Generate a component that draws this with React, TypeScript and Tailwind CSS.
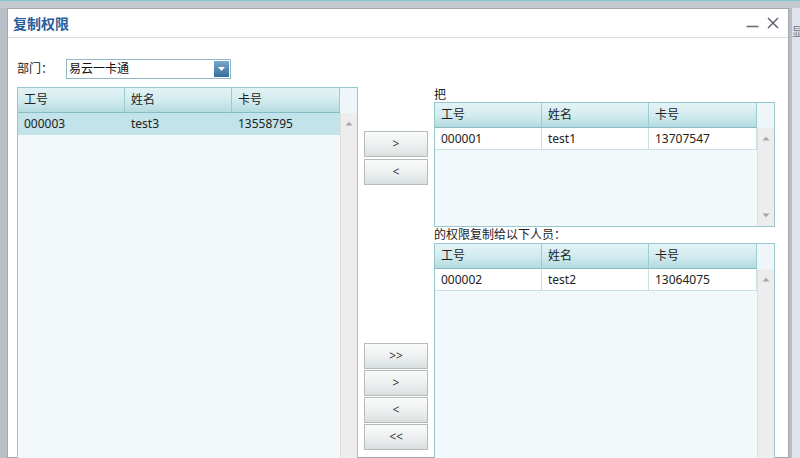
const cols = ["工号", "姓名", "卡号"];
const colW = ["w-[107px]", "w-[107px]", "w-[108px]"];

type Row = [string, string, string];

function UpArrow() {
  return (
    <svg width="8" height="5" viewBox="0 0 8 5" className="block">
      <path d="M0.5 4.5 L4 0.8 L7.5 4.5 Z" fill="#a6a6a6" />
    </svg>
  );
}

function DownArrow() {
  return (
    <svg width="8" height="5" viewBox="0 0 8 5" className="block">
      <path d="M0.5 0.5 L4 4.2 L7.5 0.5 Z" fill="#a6a6a6" />
    </svg>
  );
}

function Grid({
  rows,
  selected,
  h,
  downArrow,
}: {
  rows: Row[];
  selected?: boolean;
  h: string;
  downArrow?: boolean;
}) {
  return (
    <div className={`flex w-[341px] flex-col border border-[#97c8ce] bg-[#f3f8fb] ${h}`}>
      <div className="flex h-[25px] shrink-0">
        {cols.map((c, i) => (
          <div
            key={c}
            className={`${colW[i]} flex items-center border-r border-b border-r-[#9ccbd0] border-b-[#86bcc3] bg-gradient-to-b from-[#e3f3f5] via-[#d3ecef] to-[#b3dbe0] pl-[6px] text-[12px] text-[#222]`}
          >
            {c}
          </div>
        ))}
        <div className="flex-1 bg-[#eef6f9]" />
      </div>
      <div className="flex min-h-0 flex-1">
        <div className="flex-1">
          {rows.map((r) => (
            <div
              key={r[0]}
              className={`flex h-[22px] ${selected ? "bg-[#c2e3e9]" : "bg-white"}`}
            >
              {r.map((v, i) => (
                <div
                  key={i}
                  className={`${colW[i]} flex items-center pl-[6px] text-[12px] text-[#222] ${
                    selected ? "" : "border-r border-b border-[#c6e0e4]"
                  }`}
                >
                  {v}
                </div>
              ))}
            </div>
          ))}
        </div>
        <div className="flex w-[17px] flex-col items-center justify-between border-l border-[#dedede] bg-[#ededed] pt-[8px] pb-[8px]">
          <UpArrow />
          {downArrow ? <DownArrow /> : <span />}
        </div>
      </div>
    </div>
  );
}

function Btn({ label }: { label: string }) {
  return (
    <div className="flex h-[26px] w-[64px] items-center justify-center border border-[#b3bbbb] bg-gradient-to-b from-[#f9fafa] via-[#eef1f1] to-[#d9dfdf] text-[12px] text-[#333]">
      {label}
    </div>
  );
}

export default function App() {
  return (
    <div className="relative flex h-[458px] w-[800px] flex-col overflow-hidden bg-[#c4c8cf] font-['Noto_Sans','Noto_Sans_CJK_SC',sans-serif]">
      <div className="h-px shrink-0 bg-[#86c3d3]" />
      <div className="flex min-h-0 flex-1 pt-[7px]">
        <div className="w-[7px] shrink-0 bg-[#babec6]" />
        <div className="flex w-[782px] shrink-0 flex-col border border-[#a3a7ae] bg-white">
          <div className="flex h-[29px] shrink-0 items-center justify-between border-b border-[#dcdcdc] pl-[5px] pr-[9px]">
            <span className="text-[14px] font-bold text-[#2a5d9c]">复制权限</span>
            <div className="flex items-center gap-[8px]">
              <svg width="13" height="12" viewBox="0 0 13 12">
                <path d="M0.5 9.5 H12.5" stroke="#6e6e6e" strokeWidth="1.6" />
              </svg>
              <svg width="12" height="12" viewBox="0 0 12 12">
                <path d="M1 1 L11 11 M11 1 L1 11" stroke="#5c6470" strokeWidth="1.5" />
              </svg>
            </div>
          </div>

          <div className="flex flex-col pl-[9px] pt-[21px]">
            <div className="flex h-[20px] items-center text-[12px] text-[#222]">
              <span className="w-[49px]">部门：</span>
              <div className="flex h-[20px] w-[165px] items-center justify-between border border-[#8fb9c6] bg-white pl-[2px] pr-px">
                <span className="text-[12px] text-[#111]">易云一卡通</span>
                <div className="flex h-[16px] w-[15px] items-center justify-center bg-gradient-to-b from-[#7aa9cb] to-[#2f6e9c]">
                  <svg width="7" height="4" viewBox="0 0 7 4">
                    <path d="M0 0 H7 L3.5 4 Z" fill="#fff" />
                  </svg>
                </div>
              </div>
            </div>

            <div className="mt-[8px] flex">
              <Grid rows={[["000003", "test3", "13558795"]]} selected h="h-[380px]" />

              <div className="ml-[6px] flex w-[64px] flex-col">
                <div className="mt-[44px] flex flex-col gap-[2px]">
                  <Btn label=">" />
                  <Btn label="<" />
                </div>
                <div className="mt-[158px] flex flex-col gap-px">
                  <Btn label=">>" />
                  <Btn label=">" />
                  <Btn label="<" />
                  <Btn label="<<" />
                </div>
              </div>

              <div className="ml-[6px] flex flex-col">
                <div className="flex h-[15px] items-end text-[12px] leading-[14px] text-[#222]">把</div>
                <Grid rows={[["000001", "test1", "13707547"]]} h="h-[125px]" downArrow />
                <div className="flex h-[16px] items-center text-[12px] text-[#222]">的权限复制给以下人员：</div>
                <Grid rows={[["000002", "test2", "13064075"]]} h="h-[240px]" />
              </div>
            </div>
          </div>
        </div>
        <div className="flex-1 bg-[#b9bcc4] pl-[3px]">
          <div className="h-full w-full bg-[#dfe3ea] pt-[16px] text-[11px] text-[#777]">显</div>
        </div>
      </div>
    </div>
  );
}
